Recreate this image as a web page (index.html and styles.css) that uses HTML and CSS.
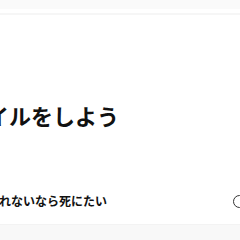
FILE: index.html
```html
<!DOCTYPE html>
<html lang="ja">
<head>
<meta charset="utf-8">
<link rel="stylesheet" href="styles.css">
</head>
<body>
<div class="page">
  <div class="topbar"></div>
  <div class="topline"></div>
  <main class="content">
    <h1 class="title">スタイルをしよう</h1>
    <div class="row">
      <span class="label">られないなら死にたい</span>
      <span class="radio"></span>
    </div>
  </main>
  <div class="footer"></div>
</div>
</body>
</html>
```
FILE: styles.css
```css
html, body {
  margin: 0;
  padding: 0;
  width: 240px;
  height: 240px;
  overflow: hidden;
  background: #ffffff;
}
.page {
  width: 240px;
  height: 240px;
  display: flex;
  flex-direction: column;
  font-family: "Noto Sans CJK JP", "Noto Sans", sans-serif;
  color: #111111;
}
.topbar {
  height: 9px;
  background: #fafafa;
  flex: none;
}
.topline {
  height: 2px;
  margin-top: 4px;
  background: #f6f6f6;
  flex: none;
}
.content {
  flex: 1;
  display: flex;
  flex-direction: column;
}
.title {
  margin: 84px 0 0 -57px;
  font-size: 22px;
  line-height: 32px;
  font-weight: 700;
  white-space: nowrap;
}
.row {
  margin-top: 61px;
  display: flex;
  align-items: center;
  justify-content: space-between;
  margin-left: -13px;
  margin-right: -6px;
}
.label {
  font-size: 12px;
  line-height: 18px;
  font-weight: 700;
  white-space: nowrap;
}
.radio {
  width: 13px;
  height: 13px;
  border: 1.5px solid #333333;
  border-radius: 50%;
  box-sizing: border-box;
  flex: none;
}
.footer {
  height: 15px;
  background: #f8f8f8;
  border-top: 1px solid #f3f3f3;
  flex: none;
}
```
